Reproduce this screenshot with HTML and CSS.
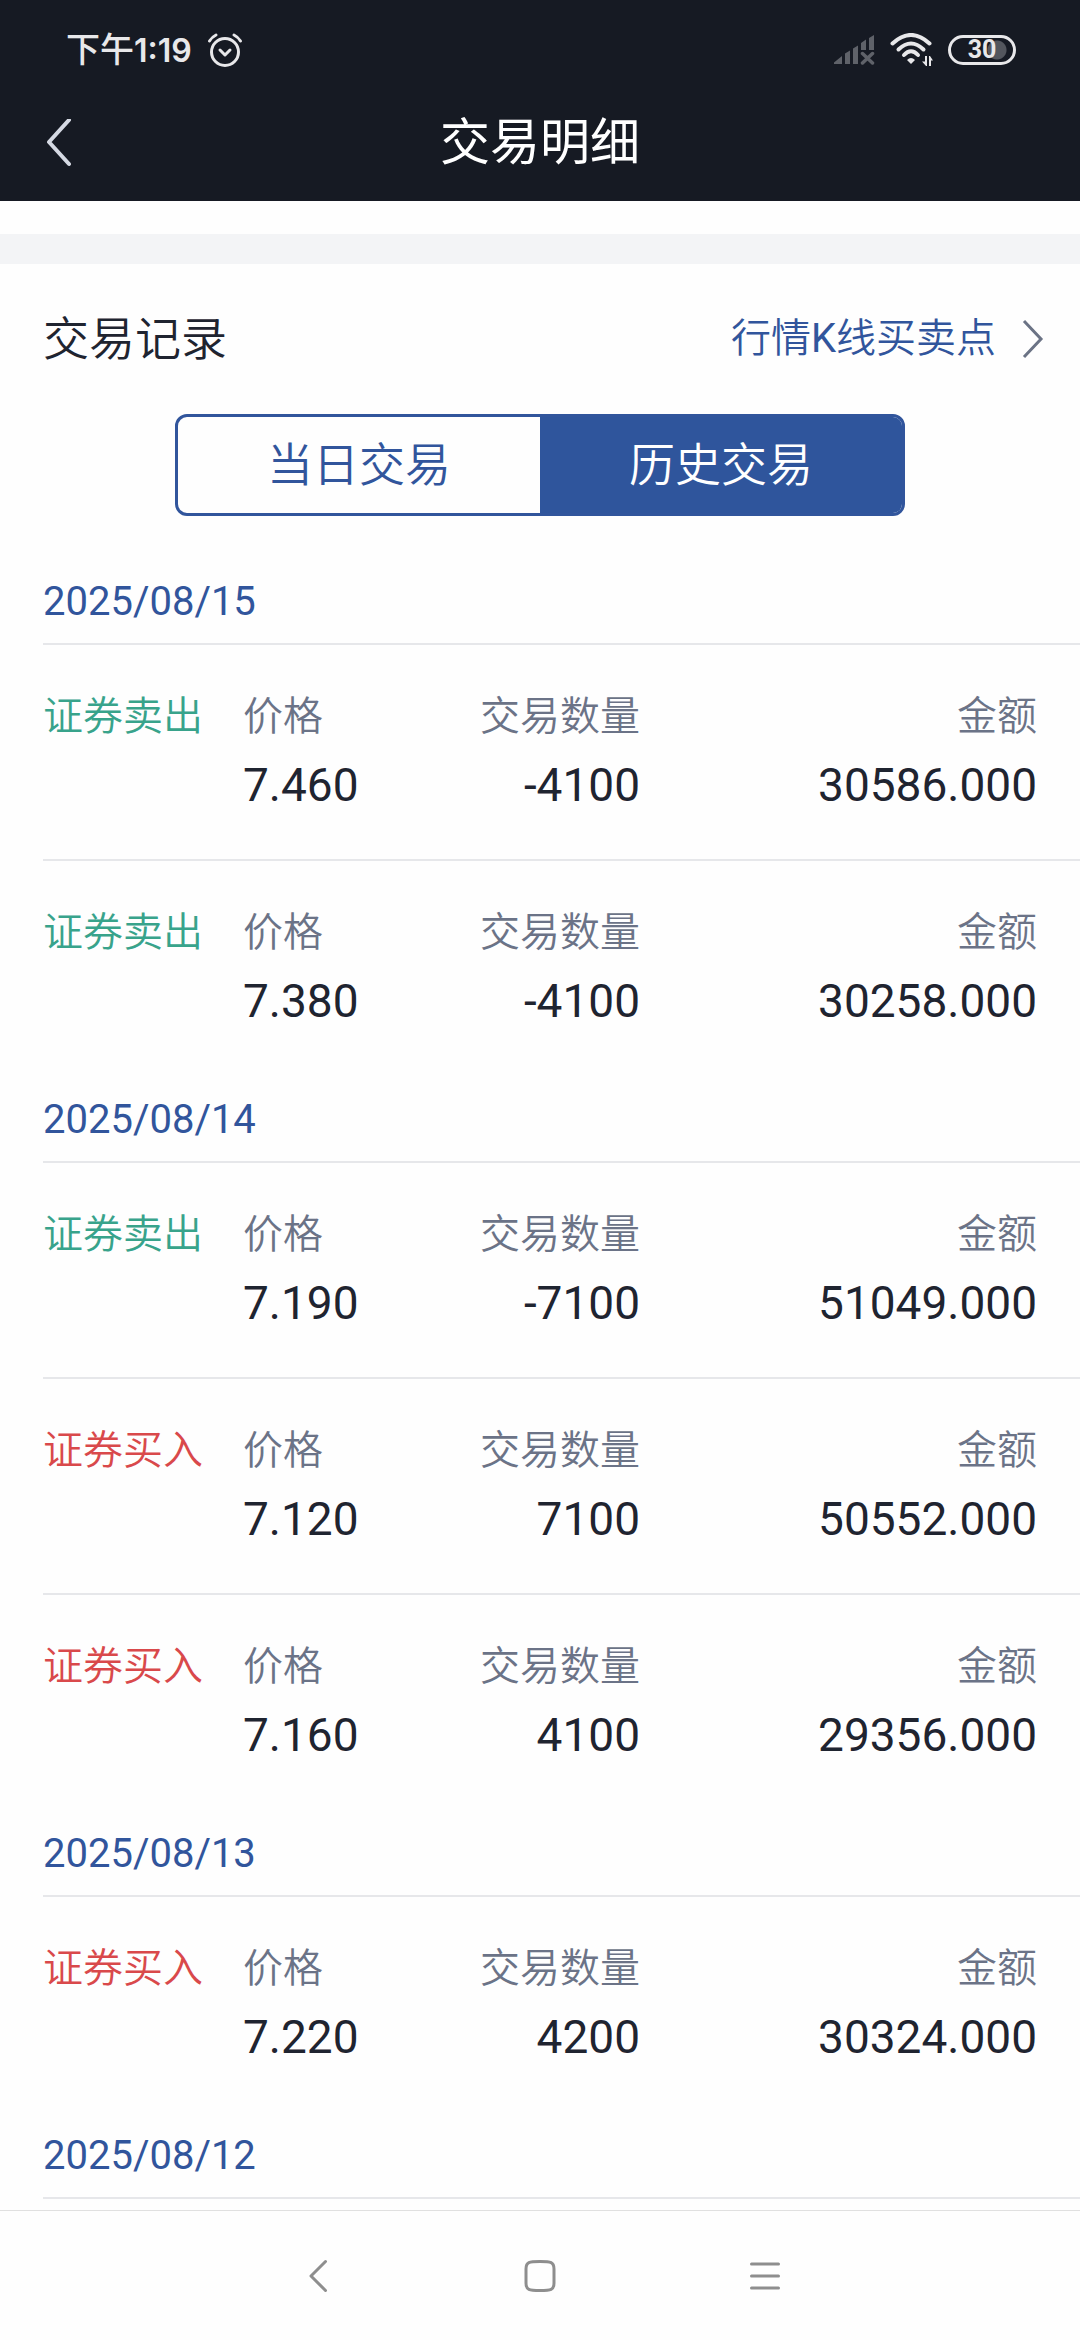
FILE: index.html
```html
<!DOCTYPE html>
<html lang="zh-CN">
<head>
    <meta charset="UTF-8">
    <meta name="viewport" content="width=device-width, initial-scale=1.0">
    <title>交易明细</title>
    <link rel="stylesheet" href="styles.css">
</head>
<body>
    <header class="top">
        <div class="status-bar">
            <div class="status-left">
                <span class="clock">下午<span class="clock-digits">1:19</span></span>
                <svg class="icon-alarm" width="36" height="36" viewBox="0 0 36 36" fill="none" stroke="currentColor" stroke-width="3" stroke-linecap="round" stroke-linejoin="round">
                    <circle cx="18" cy="20" r="13.5"/>
                    <path d="M13 18l5 5 5-5"/>
                    <path d="M2.5 9Q5 5 9 3M33.500 9Q31 5 27 3"/>
                </svg>
            </div>
            <div class="status-right">
                <svg class="icon-signal" width="41" height="30" viewBox="0 0 41 30">
                    <path d="M0 27.500L8 21V29H0zM11 18.500L16 15.500V29H11zM19 13.500L24 10.500V29H19zM27 8L32 4.500V15H27zM35 3L40 0V15H35z" fill="currentColor"/>
                    <path d="M28.500 18.500L38.500 28M38.500 18.500L28.500 28" stroke="currentColor" stroke-width="3.500" stroke-linecap="round"/>
                </svg>
                <svg class="icon-wifi" width="43" height="34" viewBox="0 0 43 34" fill="none" stroke="currentColor" stroke-width="4" stroke-linecap="round">
                    <path d="M2.500 10.500Q21 -6.500 39.500 10.500"/>
                    <path d="M8.500 16.500Q21 4.500 33.500 16.500"/>
                    <path d="M14 22Q21 14.500 28 22"/>
                    <path d="M17 27Q21 23 25 27L21 31z" fill="currentColor" stroke="none"/>
                    <path d="M35 23H37V33H36L32 28.500H35zM39 33H41V27.500H43L40 23H39z" fill="currentColor" stroke="none"/>
                </svg>
                <div class="battery"><span>30</span></div>
            </div>
        </div>
        <div class="title-bar">
            <button class="back-btn" aria-label="返回">
                <svg width="26" height="48" viewBox="0 0 26 48" fill="none" stroke="currentColor" stroke-width="4" stroke-linecap="round" stroke-linejoin="round">
                    <path d="M23 1L3 23 23 45"/>
                </svg>
            </button>
            <h1>交易明细</h1>
        </div>
    </header>

    <main class="content">
        <div class="section-gap"></div>
        <div class="section-head">
            <h2>交易记录</h2>
            <a href="#" class="kline-link">
                <span>行情<span class="latin">K</span>线买卖点</span>
                <svg width="22" height="40" viewBox="0 0 22 40" fill="none" stroke="#6b7385" stroke-width="3">
                    <path d="M2 2L19 20 2 38"/>
                </svg>
            </a>
        </div>
        <div class="tabs">
            <button class="tab">当日交易</button>
            <button class="tab active">历史交易</button>
        </div>

        <section class="day">
            <h3>2025/08/15</h3>
            <div class="record">
                <span class="type sell">证券卖出</span>
                <div class="field"><span class="label">价格</span><span class="value">7.460</span></div>
                <div class="field right"><span class="label">交易数量</span><span class="value">-4100</span></div>
                <div class="field right"><span class="label">金额</span><span class="value">30586.000</span></div>
            </div>
            <div class="record">
                <span class="type sell">证券卖出</span>
                <div class="field"><span class="label">价格</span><span class="value">7.380</span></div>
                <div class="field right"><span class="label">交易数量</span><span class="value">-4100</span></div>
                <div class="field right"><span class="label">金额</span><span class="value">30258.000</span></div>
            </div>
        </section>

        <section class="day">
            <h3>2025/08/14</h3>
            <div class="record">
                <span class="type sell">证券卖出</span>
                <div class="field"><span class="label">价格</span><span class="value">7.190</span></div>
                <div class="field right"><span class="label">交易数量</span><span class="value">-7100</span></div>
                <div class="field right"><span class="label">金额</span><span class="value">51049.000</span></div>
            </div>
            <div class="record">
                <span class="type buy">证券买入</span>
                <div class="field"><span class="label">价格</span><span class="value">7.120</span></div>
                <div class="field right"><span class="label">交易数量</span><span class="value">7100</span></div>
                <div class="field right"><span class="label">金额</span><span class="value">50552.000</span></div>
            </div>
            <div class="record">
                <span class="type buy">证券买入</span>
                <div class="field"><span class="label">价格</span><span class="value">7.160</span></div>
                <div class="field right"><span class="label">交易数量</span><span class="value">4100</span></div>
                <div class="field right"><span class="label">金额</span><span class="value">29356.000</span></div>
            </div>
        </section>

        <section class="day">
            <h3>2025/08/13</h3>
            <div class="record">
                <span class="type buy">证券买入</span>
                <div class="field"><span class="label">价格</span><span class="value">7.220</span></div>
                <div class="field right"><span class="label">交易数量</span><span class="value">4200</span></div>
                <div class="field right"><span class="label">金额</span><span class="value">30324.000</span></div>
            </div>
        </section>

        <section class="day">
            <h3>2025/08/12</h3>
        </section>
    </main>

    <nav class="system-nav">
        <button aria-label="返回">
            <svg width="32" height="34" viewBox="0 0 32 34" fill="none" stroke="currentColor" stroke-width="3" stroke-linecap="round" stroke-linejoin="round">
                <path d="M26.500 2.500L12 17 26.500 31.500"/>
            </svg>
        </button>
        <button aria-label="主屏幕">
            <svg width="32" height="34" viewBox="0 0 32 34" fill="none" stroke="currentColor" stroke-width="3">
                <path d="M16 2.500C27 2.500 30 3 30 10V24C30 31 27 31.500 16 31.500S2 31 2 24V10C2 3 5 2.500 16 2.500z"/>
            </svg>
        </button>
        <button aria-label="最近任务">
            <svg width="32" height="34" viewBox="0 0 32 34" fill="none" stroke="currentColor" stroke-width="3" stroke-linecap="round">
                <path d="M2.500 5H29.500M2.500 17H29.500M2.500 29H29.500"/>
            </svg>
        </button>
    </nav>
</body>
</html>
```
FILE: styles.css
```css
* {
    box-sizing: border-box;
}
body {
    display: flex;
    flex-direction: column;
    height: 100vh;
    margin: 0;
    background-color: #fefefe;
    color: #1f2430;
    font-family: Roboto, "Noto Sans CJK SC", sans-serif;
    font-size: 40px;
}
h1, h2, h3 {
    margin: 0;
    font-weight: 400;
}
button {
    padding: 0;
    border: none;
    background: none;
    color: inherit;
    font: inherit;
    cursor: pointer;
}
svg {
    display: block;
}

/* status bar + title */
.top {
    flex: none;
    background-color: #161a23;
    color: #fff;
}
.status-bar {
    display: flex;
    justify-content: space-between;
    align-items: center;
    height: 100px;
    padding: 0 64px 0 66px;
    color: #e8e8ea;
}
.status-left,
.status-right {
    display: flex;
    align-items: center;
    gap: 15px;
}
.clock {
    font-size: 34px;
    line-height: 48px;
    font-weight: 500;
}
.clock-digits {
    font-family: Inter, Roboto, sans-serif;
    font-size: 32px;
    font-weight: 600;
}
.icon-signal {
    color: #5f6269;
}
.battery {
    display: flex;
    justify-content: center;
    align-items: center;
    width: 68px;
    height: 30px;
    border: 3px solid #e8e8ea;
    border-radius: 15px;
    background: radial-gradient(circle at 46px 12px, #53565d 9px, transparent 10px);
    font-size: 25px;
    line-height: 24px;
    font-weight: 700;
}
.title-bar {
    display: grid;
    grid-template-columns: 1fr auto 1fr;
    align-items: center;
    height: 101px;
    padding: 0 46px 16px;
}
.back-btn {
    justify-self: start;
    color: #d5d9e3;
}
.title-bar h1 {
    font-size: 50px;
    line-height: 72px;
}

/* page content */
.content {
    flex: 1;
    min-height: 0;
    overflow: hidden;
    padding-top: 33px;
}
.section-gap {
    height: 30px;
    background-color: #f3f4f6;
}
.section-head {
    display: flex;
    justify-content: space-between;
    align-items: center;
    height: 150px;
    padding: 0 36px 0 43px;
}
.section-head h2 {
    font-size: 46px;
    font-weight: 350;
    line-height: 56px;
}
.kline-link {
    display: flex;
    align-items: center;
    gap: 26px;
    color: #31559c;
    font-weight: 350;
    line-height: 56px;
    text-decoration: none;
}
.latin {
    font-weight: 400;
}
.tabs {
    display: flex;
    height: 102px;
    margin: 0 175px 43px;
    border: 3px solid #31559c;
    border-radius: 12px;
    overflow: hidden;
}
.tab {
    flex: 1;
    color: #31559c;
    font-size: 46px;
    font-weight: 350;
    line-height: 56px;
}
.tab.active {
    background-color: #2f559c;
    color: #fff;
}

/* records grouped by day */
.day {
    margin-left: 43px;
}
.day h3 {
    padding: 19px 0 17px;
    border-bottom: 2px solid #e6e7ea;
    color: #31559c;
    font-size: 40px;
    line-height: 48px;
}
.record {
    display: grid;
    grid-template-columns: 200px 1fr 1fr 2fr;
    height: 216px;
    padding: 44px 43px 0 0;
    border-bottom: 2px solid #e6e7ea;
}
.record:last-child {
    border-bottom: none;
}
.type,
.label {
    font-size: 40px;
    font-weight: 350;
    line-height: 56px;
}
.sell {
    color: #38a38b;
}
.buy {
    color: #d9494b;
}
.field {
    display: flex;
    flex-direction: column;
    gap: 12px;
}
.right {
    text-align: right;
}
.label {
    color: #6b7387;
}
.value {
    font-size: 46px;
    line-height: 56px;
}

/* system navigation */
.system-nav {
    display: flex;
    justify-content: center;
    align-items: center;
    gap: 193px;
    flex: none;
    height: 130px;
    border-top: 1px solid #e0e0e0;
    color: #8e8e8e;
}
```
